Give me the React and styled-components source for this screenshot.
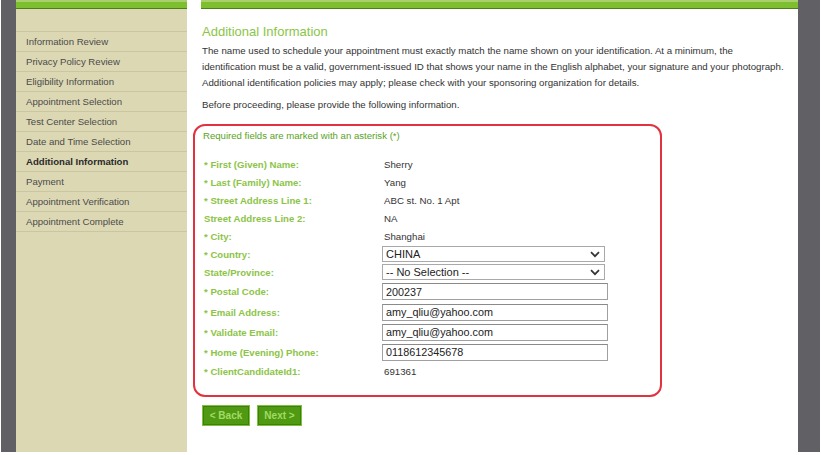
import React from "react";
import styled, { createGlobalStyle } from "styled-components";

const Global = createGlobalStyle`
  html, body { margin: 0; padding: 0; background: #fff; overflow: hidden; }
  body { font-family: "Liberation Sans", Arial, sans-serif; }
`;

const Page = styled.div`
  display: flex;
  height: 452px;
  padding: 0 1px;
  background: #fff;
`;

const Strip = styled.div`
  width: ${(p) => p.$w}px;
  flex: none;
  background: #606065;
`;

const Sidebar = styled.aside`
  width: 171px;
  flex: none;
  background: #ddd8b4;
  display: flex;
  flex-direction: column;
`;

const GreenBar = styled.div`
  height: 6px;
  flex: none;
  background: #7dbf2f;
  border-bottom: 1px solid #4f7f1d;
  border-top: 2px solid #a9cf6f;
`;

const Nav = styled.ul`
  list-style: none;
  margin: 22px 0 0;
  padding: 0;
  border-top: 1px solid #cbc6a2;
`;

const NavItem = styled.li`
  height: 19px;
  line-height: 19px;
  padding-left: 10px;
  font-size: 9.6px;
  color: ${(p) => (p.$active ? "#2a2a2a" : "#4a4a4a")};
  font-weight: ${(p) => (p.$active ? "bold" : "normal")};
  border-bottom: 1px solid #cbc6a2;
  white-space: nowrap;
`;

const Main = styled.main`
  width: 611px;
  flex: none;
  padding-left: 14px;
  box-sizing: border-box;
  display: flex;
  flex-direction: column;
`;

const TopBar = styled.div`
  height: 6px;
  background: #7dbf2f;
  border-top: 2px solid #a9cf6f;
  border-bottom: 1px solid #4f7f1d;
`;

const Title = styled.h1`
  margin: 14px 0 0 1px;
  font-size: 13px;
  line-height: 18px;
  font-weight: normal;
  color: #8cc447;
`;

const Para = styled.p`
  margin: ${(p) => p.$mt}px 0 0 1px;
  font-size: 9.7px;
  line-height: 16px;
  color: #333;
  width: 584px;
`;

const RedBox = styled.section`
  margin: 11px 0 0 -8px;
  width: 469px;
  height: 273px;
  box-sizing: border-box;
  border: 2px solid #e2323f;
  border-radius: 12px;
  padding: 3px 0 0 8px;
`;

const Required = styled.div`
  font-size: 9.6px;
  line-height: 14px;
  color: #5aa323;
  margin-bottom: 12px;
`;

const Form = styled.div`
  display: grid;
  grid-template-columns: 180px 1fr;
  padding-left: 1px;
`;

const Label = styled.div`
  height: ${(p) => p.$h}px;
  display: flex;
  align-items: center;
  font-size: 9.6px;
  font-weight: bold;
  color: #8cc447;
  white-space: nowrap;
`;

const Cell = styled.div`
  height: ${(p) => p.$h}px;
  display: flex;
  align-items: center;
  font-size: 9.7px;
  color: #333;
`;

const SelectBox = styled.div`
  width: 223px;
  height: 16px;
  box-sizing: border-box;
  border: 1px solid #a9a9a9;
  margin-left: -2px;
  padding: 0 4px 0 3px;
  display: flex;
  align-items: center;
  justify-content: space-between;
  font-size: 11px;
  color: #222;
  background: #fff;
`;

const Input = styled.input`
  width: 226px;
  height: 17px;
  box-sizing: border-box;
  margin: 0 0 0 -2px;
  border: 1px solid #a0a0a0;
  border-top-color: #8a8a8a;
  padding: 0 3px;
  font-family: "Liberation Sans", Arial, sans-serif;
  font-size: 10.8px;
  color: #222;
  outline: none;
`;

const Buttons = styled.div`
  display: flex;
  gap: 7px;
  margin: 8px 0 0 1px;
`;

const Button = styled.button`
  width: ${(p) => p.$w}px;
  height: 21px;
  padding: 0;
  background: #4f9a12;
  border: 1px solid #7bc243;
  box-shadow: inset 0 0 0 1px #3f7f0a;
  color: #a3da66;
  font-family: "Liberation Sans", Arial, sans-serif;
  font-size: 10px;
  font-weight: bold;
`;

const Chevron = () => (
  <svg width="10" height="7" viewBox="0 0 10 7">
    <path d="M1 1.2 L5 5.2 L9 1.2" fill="none" stroke="#333" strokeWidth="1.7" />
  </svg>
);

const navItems = [
  "Information Review",
  "Privacy Policy Review",
  "Eligibility Information",
  "Appointment Selection",
  "Test Center Selection",
  "Date and Time Selection",
  "Additional Information",
  "Payment",
  "Appointment Verification",
  "Appointment Complete",
];

const rows = [
  { label: "* First (Given) Name:", value: "Sherry" },
  { label: "* Last (Family) Name:", value: "Yang" },
  { label: "* Street Address Line 1:", value: "ABC st. No. 1 Apt" },
  { label: "Street Address Line 2:", value: "NA" },
  { label: "* City:", value: "Shanghai" },
  { label: "* Country:", value: "CHINA", kind: "select" },
  { label: "State/Province:", value: "-- No Selection --", kind: "select" },
  { label: "* Postal Code:", value: "200237", kind: "input", h: 21 },
  { label: "* Email Address:", value: "amy_qliu@yahoo.com", kind: "input", h: 20 },
  { label: "* Validate Email:", value: "amy_qliu@yahoo.com", kind: "input", h: 20 },
  { label: "* Home (Evening) Phone:", value: "0118612345678", kind: "input", h: 20 },
  { label: "* ClientCandidateId1:", value: "691361", h: 19 },
];

export default function App() {
  return (
    <>
      <Global />
      <Page>
        <Strip $w={15} />
        <Sidebar>
          <GreenBar />
          <Nav>
            {navItems.map((n) => (
              <NavItem key={n} $active={n === "Additional Information"}>
                {n}
              </NavItem>
            ))}
          </Nav>
        </Sidebar>
        <Main>
          <TopBar />
          <Title>Additional Information</Title>
          <Para $mt={2}>
            The name used to schedule your appointment must exactly match the name shown on your
            identification. At a minimum, the identification must be a valid, government-issued ID
            that shows your name in the English alphabet, your signature and your photograph.
            Additional identification policies may apply; please check with your sponsoring
            organization for details.
          </Para>
          <Para $mt={6}>Before proceeding, please provide the following information.</Para>
          <RedBox>
            <Required>Required fields are marked with an asterisk (*)</Required>
            <Form>
              {rows.map((r) => {
                const h = r.h || 18;
                return (
                  <React.Fragment key={r.label}>
                    <Label $h={h}>{r.label}</Label>
                    <Cell $h={h}>
                      {r.kind === "select" ? (
                        <SelectBox>
                          <span>{r.value}</span>
                          <Chevron />
                        </SelectBox>
                      ) : r.kind === "input" ? (
                        <Input readOnly value={r.value} />
                      ) : (
                        r.value
                      )}
                    </Cell>
                  </React.Fragment>
                );
              })}
            </Form>
          </RedBox>
          <Buttons>
            <Button $w={48}>&lt; Back</Button>
            <Button $w={45}>Next &gt;</Button>
          </Buttons>
        </Main>
        <Strip $w={22} />
      </Page>
    </>
  );
}
